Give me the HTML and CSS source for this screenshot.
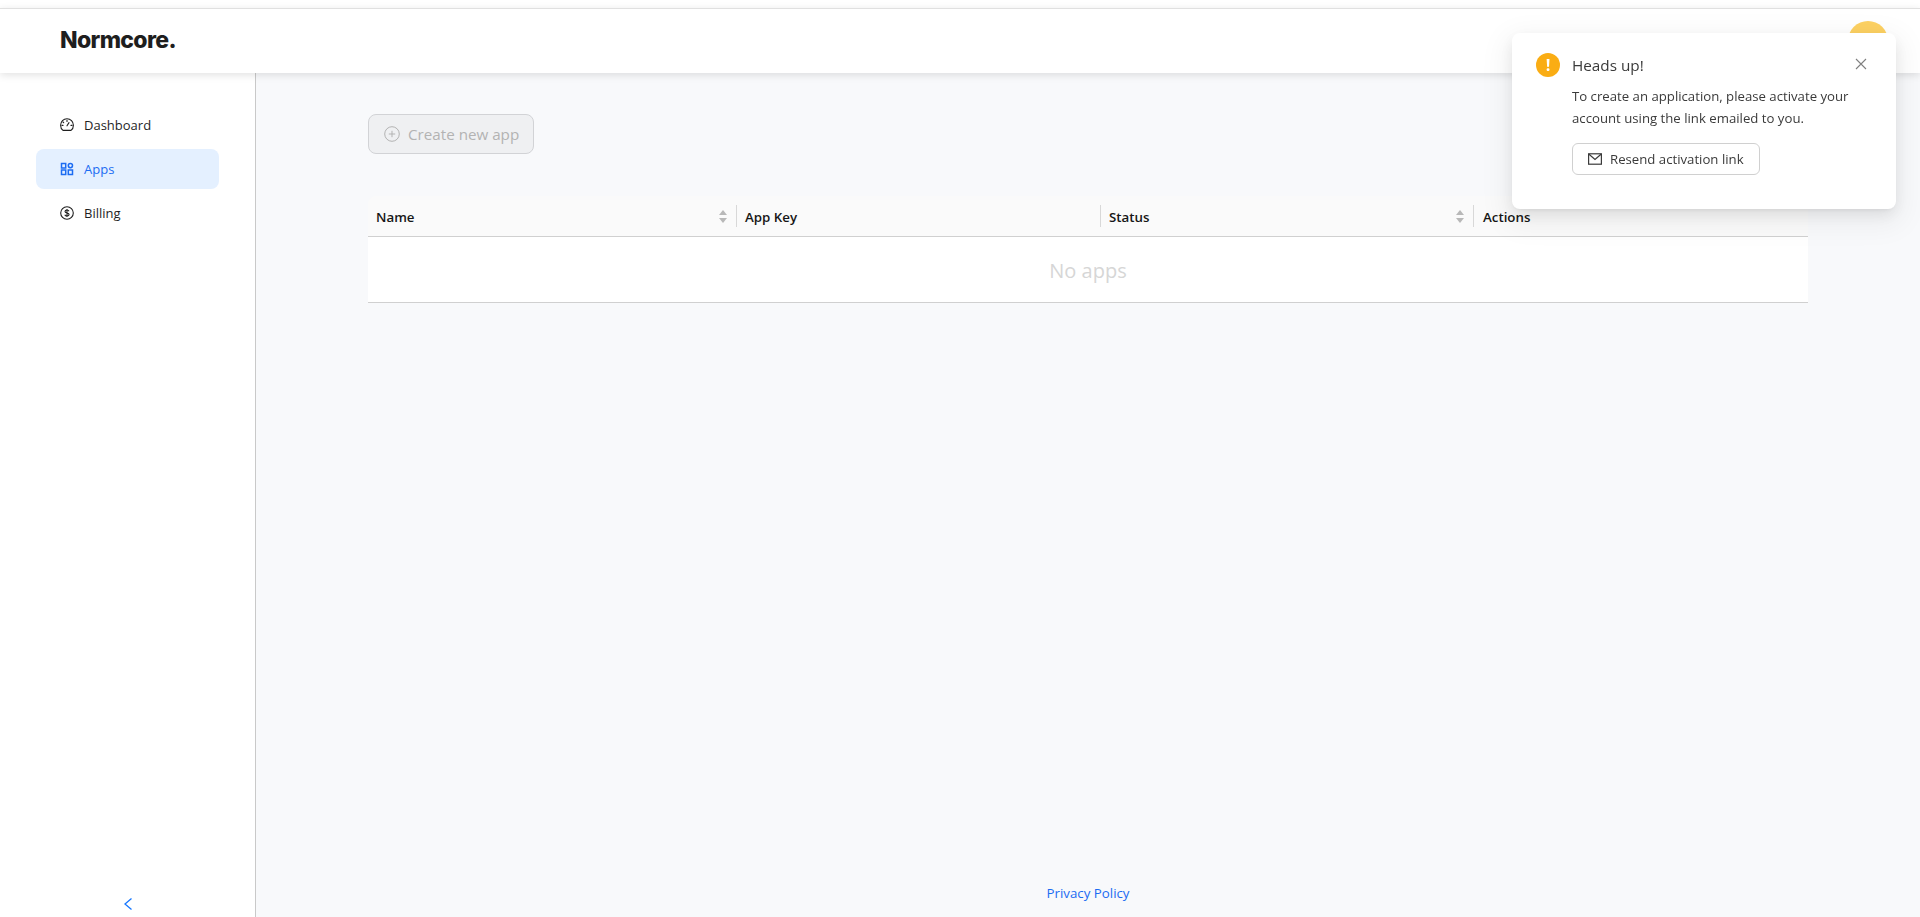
FILE: index.html
```html
<!DOCTYPE html>
<html lang="en">
<head>
<meta charset="utf-8">
<title>Normcore</title>
<link rel="stylesheet" href="styles.css">
</head>
<body>
<div class="app">
  <header class="topbar">
    <div class="logo">Normcore.</div>
    <div class="avatar"></div>
  </header>
  <div class="body">
    <aside class="sidebar">
      <nav class="nav">
        <a class="nav-item">
          <svg class="nav-icon" viewBox="0 0 14 14" fill="none" stroke="currentColor" stroke-width="1.1"><path d="M3 12.4C1.5 11.3.6 9.3.6 7.2a6.4 6.4 0 0 1 12.8 0c0 2.100-.9 4.100-2.400 5.200z"/><path d="M7 7.800 9 4.600M7 2.400v1M3 4l.7.7M2 7.400h1M11 7.400h1" stroke-linecap="round"/></svg>
          <span>Dashboard</span>
        </a>
        <a class="nav-item active">
          <svg class="nav-icon" viewBox="0 0 14 14" fill="none" stroke="currentColor" stroke-width="1.500"><rect x="1.500" y="1.500" width="4.200" height="4.500"/><rect x="1.500" y="8" width="4.200" height="4.500"/><rect x="8.300" y="8" width="4.200" height="4.500"/><circle cx="10.400" cy="3.600" r="2.100"/></svg>
          <span>Apps</span>
        </a>
        <a class="nav-item">
          <svg class="nav-icon" viewBox="0 0 14 14" fill="none" stroke="currentColor" stroke-width="1.1"><circle cx="7" cy="7" r="6.300"/><path d="M9 5.200C8.700 4.400 8 4 7 4c-1.200 0-2 .6-2 1.500C5 7.700 9.100 6.400 9.100 8.600 9.100 9.500 8.200 10 7 10c-1.100 0-1.900-.5-2.200-1.300M7 3v8"/></svg>
          <span>Billing</span>
        </a>
      </nav>
      <button class="collapse" aria-label="Collapse">
        <svg viewBox="0 0 10 14" width="10" height="14" fill="none" stroke="#1677ff" stroke-width="1.300"><path d="M8.500 1.500 2 7l6.500 5.500"/></svg>
      </button>
    </aside>
    <main class="main">
      <div class="content">
        <button class="create-btn" disabled>
          <svg class="create-icon" viewBox="0 0 16 16" fill="none" stroke="currentColor" stroke-width="1"><circle cx="8" cy="8" r="7.300"/><path d="M8 4.800v6.400M4.800 8h6.400"/></svg>
          <span>Create new app</span>
        </button>
        <section class="table">
          <div class="thead">
            <div class="th"><span>Name</span><svg class="sorter" viewBox="0 0 8 13"><path d="M4 0l4 5H0z"/><path d="M4 13l4-5H0z"/></svg></div>
            <div class="th sep"><span>App Key</span></div>
            <div class="th sep"><span>Status</span><svg class="sorter" viewBox="0 0 8 13"><path d="M4 0l4 5H0z"/><path d="M4 13l4-5H0z"/></svg></div>
            <div class="th sep"><span>Actions</span></div>
          </div>
          <div class="empty">No apps</div>
        </section>
      </div>
      <footer class="footer"><a class="privacy">Privacy Policy</a></footer>
    </main>
  </div>
</div>
<aside class="toast">
  <div class="toast-head">
    <div class="toast-alert">!</div>
    <div class="toast-title">Heads up!</div>
    <svg class="toast-close" viewBox="0 0 12 12" fill="none" stroke="#7f7f7f" stroke-width="1.100"><path d="M1 1l10 10M11 1 1 11"/></svg>
  </div>
  <div class="toast-body">
    <p class="toast-text">To create an application, please activate your account using the link emailed to you.</p>
    <button class="resend">
      <svg class="mail" viewBox="0 0 14 12" fill="none" stroke="currentColor" stroke-width="1.200"><rect x=".6" y=".8" width="12.800" height="10.400"/><path d="M1 1.200 7 6.500l6-5.300"/></svg>
      <span>Resend activation link</span>
    </button>
  </div>
</aside>
</body>
</html>
```
FILE: styles.css
```css
* { box-sizing: border-box; }
html, body { margin: 0; height: 100%; overflow: hidden; }
body {
  font-family: "Open Sans", "Noto Sans", sans-serif;
  font-size: 14px;
  color: #1f1f1f;
  background: #fff;
}
.app { height: 100vh; display: flex; flex-direction: column; padding-top: 8px; }
.topbar {
  height: 65px;
  flex: none;
  border-top: 1px solid #e0e0e0;
  background: #fff;
  box-shadow: 0 2px 8px rgba(0, 0, 0, .12);
  display: flex;
  align-items: flex-start;
  justify-content: space-between;
  padding: 0 32px 0 60px;
  position: relative;
  z-index: 2;
  overflow: hidden;
}
.logo {
  font-family: Inter, sans-serif;
  font-weight: 800;
  font-size: 23px;
  letter-spacing: -.65px;
  line-height: 30px;
  margin-top: 16px;
  color: #1e1e1e;
}
.avatar { width: 40px; height: 40px; border-radius: 50%; background: #fdd162; margin-top: 12px; }
.body { flex: 1; display: flex; min-height: 0; }
.sidebar {
  width: 256px;
  flex: none;
  background: #fff;
  border-right: 1px solid #c9c9c9;
  display: flex;
  flex-direction: column;
  justify-content: space-between;
  padding: 32px 36px 0;
}
.nav { display: flex; flex-direction: column; gap: 4px; }
.nav-item {
  height: 40px;
  border-radius: 8px;
  display: flex;
  align-items: center;
  gap: 10px;
  padding-left: 24px;
  margin: 0;
  font-size: 13px;
  color: #1f1f1f;
}
.nav-item.active { background: #e4f0ff; color: #1c6cf2; }
.nav-icon { width: 14px; height: 14px; flex: none; }
.collapse {
  border: 0;
  background: none;
  padding: 0;
  height: 20px;
  display: flex;
  justify-content: center;
  align-items: flex-start;
  margin-left: -36px;
  margin-right: -36px;
}
.main { flex: 1; background: #f8f9fb; display: flex; flex-direction: column; justify-content: space-between; min-width: 0; }
.content { padding: 41px 112px 0; }
.create-btn {
  width: 166px;
  height: 40px;
  border: 1px solid #d2d3d6;
  border-radius: 8px;
  background: #eff0f2;
  color: #b3b3b3;
  display: flex;
  align-items: center;
  gap: 8px;
  padding: 0 0 0 15px;
  font: inherit;
  font-size: 15.200px;
}
.create-icon { width: 16px; height: 16px; flex: none; }
.table { margin-top: 42px; }
.thead {
  display: grid;
  grid-template-columns: 368px 364px 373px 1fr;
  height: 41px;
  background: #fafafa;
  border-bottom: 1px solid #d0d0d0;
  border-radius: 8px 8px 0 0;
  align-items: center;
}
.th {
  height: 22px;
  display: flex;
  align-items: center;
  justify-content: space-between;
  padding: 2px 8px 0;
  font-size: 13.300px;
  font-weight: 600;
  color: #161616;
}
.th:last-child { padding-left: 9px; }
.sep { border-left: 1px solid #d8d8d8; }
.sorter { width: 8px; height: 13px; fill: #b8b8b8; margin-right: 1px; margin-top: -2px; }
.empty {
  height: 66px;
  background: #fff;
  border-bottom: 1px solid #d0d0d0;
  display: flex;
  align-items: center;
  justify-content: center;
  padding-top: 2px;
  font-size: 20px;
  color: #d6d6d6;
}
.footer { text-align: center; padding-bottom: 15px; }
.privacy { font-size: 13.300px; color: #1c6cf2; }
.toast {
  position: fixed;
  top: 33px;
  left: 1512px;
  width: 384px;
  height: 176px;
  background: #fff;
  border-radius: 8px;
  box-shadow: 0 6px 16px rgba(0, 0, 0, .08), 0 3px 6px -4px rgba(0, 0, 0, .12), 0 9px 28px 8px rgba(0, 0, 0, .05);
  padding: 20px 24px;
  z-index: 5;
  color: #3a3a3a;
}
.toast-head { display: flex; align-items: center; gap: 12px; height: 24px; }
.toast-alert {
  width: 24px;
  height: 24px;
  border-radius: 50%;
  background: #faad14;
  color: #fff;
  font-weight: 700;
  font-size: 16px;
  line-height: 24px;
  text-align: center;
  flex: none;
}
.toast-title { font-size: 15.300px; flex: 1; }
.toast-close { width: 12px; height: 12px; margin-right: 5px; margin-top: -2px; }
.toast-body { padding-left: 36px; }
.toast-text { margin: 8px 0 0; font-size: 13.200px; line-height: 22px; }
.resend {
  margin-top: 14px;
  width: 188px;
  height: 32px;
  border: 1px solid #d0d0d0;
  border-radius: 6px;
  background: #fff;
  color: #3a3a3a;
  display: flex;
  align-items: center;
  gap: 8px;
  padding: 0 0 0 15px;
  font: inherit;
  font-size: 13.200px;
}
.mail { width: 14px; height: 12px; flex: none; }
```
